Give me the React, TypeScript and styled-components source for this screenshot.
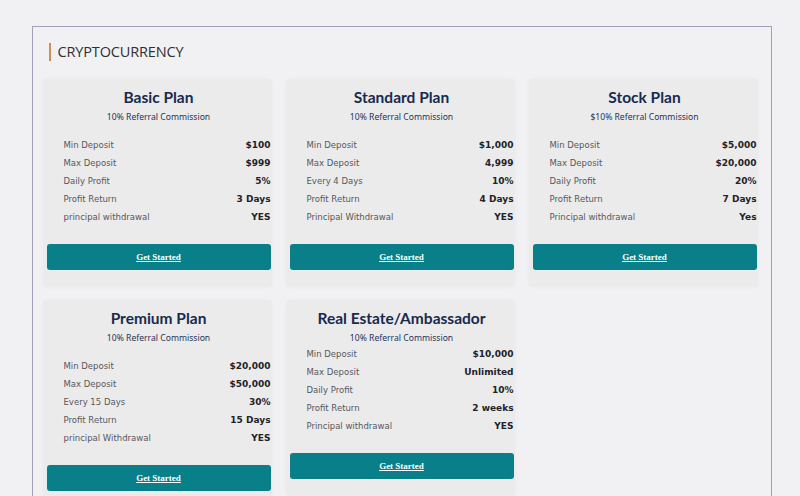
import React from "react";
import styled, { createGlobalStyle } from "styled-components";

type Row = { label: string; value: string };
type Plan = { name: string; referral: string; rows: Row[]; tight?: boolean };

const plans: Plan[] = [
  {
    name: "Basic Plan",
    referral: "10% Referral Commission",
    rows: [
      { label: "Min Deposit", value: "$100" },
      { label: "Max Deposit", value: "$999" },
      { label: "Daily Profit", value: "5%" },
      { label: "Profit Return", value: "3 Days" },
      { label: "principal withdrawal", value: "YES" },
    ],
  },
  {
    name: "Standard Plan",
    referral: "10% Referral Commission",
    rows: [
      { label: "Min Deposit", value: "$1,000" },
      { label: "Max Deposit", value: "4,999" },
      { label: "Every 4 Days", value: "10%" },
      { label: "Profit Return", value: "4 Days" },
      { label: "Principal Withdrawal", value: "YES" },
    ],
  },
  {
    name: "Stock Plan",
    referral: "$10% Referral Commission",
    rows: [
      { label: "Min Deposit", value: "$5,000" },
      { label: "Max Deposit", value: "$20,000" },
      { label: "Daily Profit", value: "20%" },
      { label: "Profit Return", value: "7 Days" },
      { label: "Principal withdrawal", value: "Yes" },
    ],
  },
  {
    name: "Premium Plan",
    referral: "10% Referral Commission",
    rows: [
      { label: "Min Deposit", value: "$20,000" },
      { label: "Max Deposit", value: "$50,000" },
      { label: "Every 15 Days", value: "30%" },
      { label: "Profit Return", value: "15 Days" },
      { label: "principal Withdrawal", value: "YES" },
    ],
  },
  {
    name: "Real Estate/Ambassador",
    referral: "10% Referral Commission",
    tight: true,
    rows: [
      { label: "Min Deposit", value: "$10,000" },
      { label: "Max Deposit", value: "Unlimited" },
      { label: "Daily Profit", value: "10%" },
      { label: "Profit Return", value: "2 weeks" },
      { label: "Principal withdrawal", value: "YES" },
    ],
  },
];

const App = () => {
  return (
    <>
      <GlobalStyle />
      <Page>
        <Section>
          <Heading>CRYPTOCURRENCY</Heading>
          <Grid>
            {plans.map((p) => (
              <Card key={p.name}>
                <Title>{p.name}</Title>
                <Referral $tight={p.tight}>{p.referral}</Referral>
                <Rows>
                  {p.rows.map((r) => (
                    <RowItem key={r.label}>
                      <Label>{r.label}</Label>
                      <Value>{r.value}</Value>
                    </RowItem>
                  ))}
                </Rows>
                <Button href="#">Get Started</Button>
              </Card>
            ))}
          </Grid>
        </Section>
      </Page>
    </>
  );
};

// STYLED COMPONENTS //
const GlobalStyle = createGlobalStyle`
  html, body {
    margin: 0;
    padding: 0;
    background: #f1f1f3;
    overflow: hidden;
  }
`;

const Page = styled.div`
  width: 800px;
  height: 496px;
  padding: 26px 0 0 32px;
  box-sizing: border-box;
  overflow: hidden;
`;

const Section = styled.section`
  width: 740px;
  border: 1.5px solid #a2a2b8;
  border-bottom: none;
  box-sizing: border-box;
  padding: 16px 10px 0 9.5px;
  min-height: 480px;
`;

const Heading = styled.h2`
  margin: 0 0 18px 6px;
  padding-left: 7px;
  border-left: 2px solid #d98c52;
  font-family: "Open Sans", sans-serif;
  font-weight: 400;
  font-size: 14.5px;
  line-height: 18px;
  color: #2e2e33;
  letter-spacing: -0.15px;
`;

const Grid = styled.div`
  display: grid;
  grid-template-columns: repeat(3, 229px);
  column-gap: 14px;
  row-gap: 13px;
  align-items: start;
`;

const Card = styled.div`
  background: #ebebec;
  border-radius: 4px;
  box-shadow: 0 0 4px rgba(0, 0, 0, 0.03);
  padding: 8px 1px 17px 4px;
  display: flex;
  flex-direction: column;
`;

const Title = styled.h3`
  margin: 0;
  text-align: center;
  font-family: "Lato", sans-serif;
  font-weight: 700;
  font-size: 15.5px;
  line-height: 20px;
  color: #172a4e;
`;

const Referral = styled.p<{ $tight?: boolean }>`
  margin: 3px 0 ${(p) => (p.$tight ? "0" : "12px")};
  text-align: center;
  font-family: "Noto Sans", sans-serif;
  font-size: 8.6px;
  line-height: 14px;
  color: #1f3357;
`;

const Rows = styled.div`
  display: flex;
  flex-direction: column;
  padding: 0 0 0 17px;
`;

const RowItem = styled.div`
  display: flex;
  justify-content: space-between;
  align-items: center;
  height: 18px;
`;

const Label = styled.span`
  font-family: "DejaVu Sans", sans-serif;
  font-size: 8.5px;
  color: #57575c;
`;

const Value = styled.span`
  font-family: "DejaVu Sans", sans-serif;
  font-weight: 700;
  font-size: 9px;
  color: #222228;
`;

const Button = styled.a`
  display: flex;
  justify-content: center;
  align-items: center;
  height: 26px;
  margin-top: 18px;
  background: #087f89;
  border-radius: 3px;
  font-family: "Liberation Serif", serif;
  font-weight: 700;
  font-size: 9px;
  color: #ffffff;
  text-decoration: underline;
`;

export default App;
